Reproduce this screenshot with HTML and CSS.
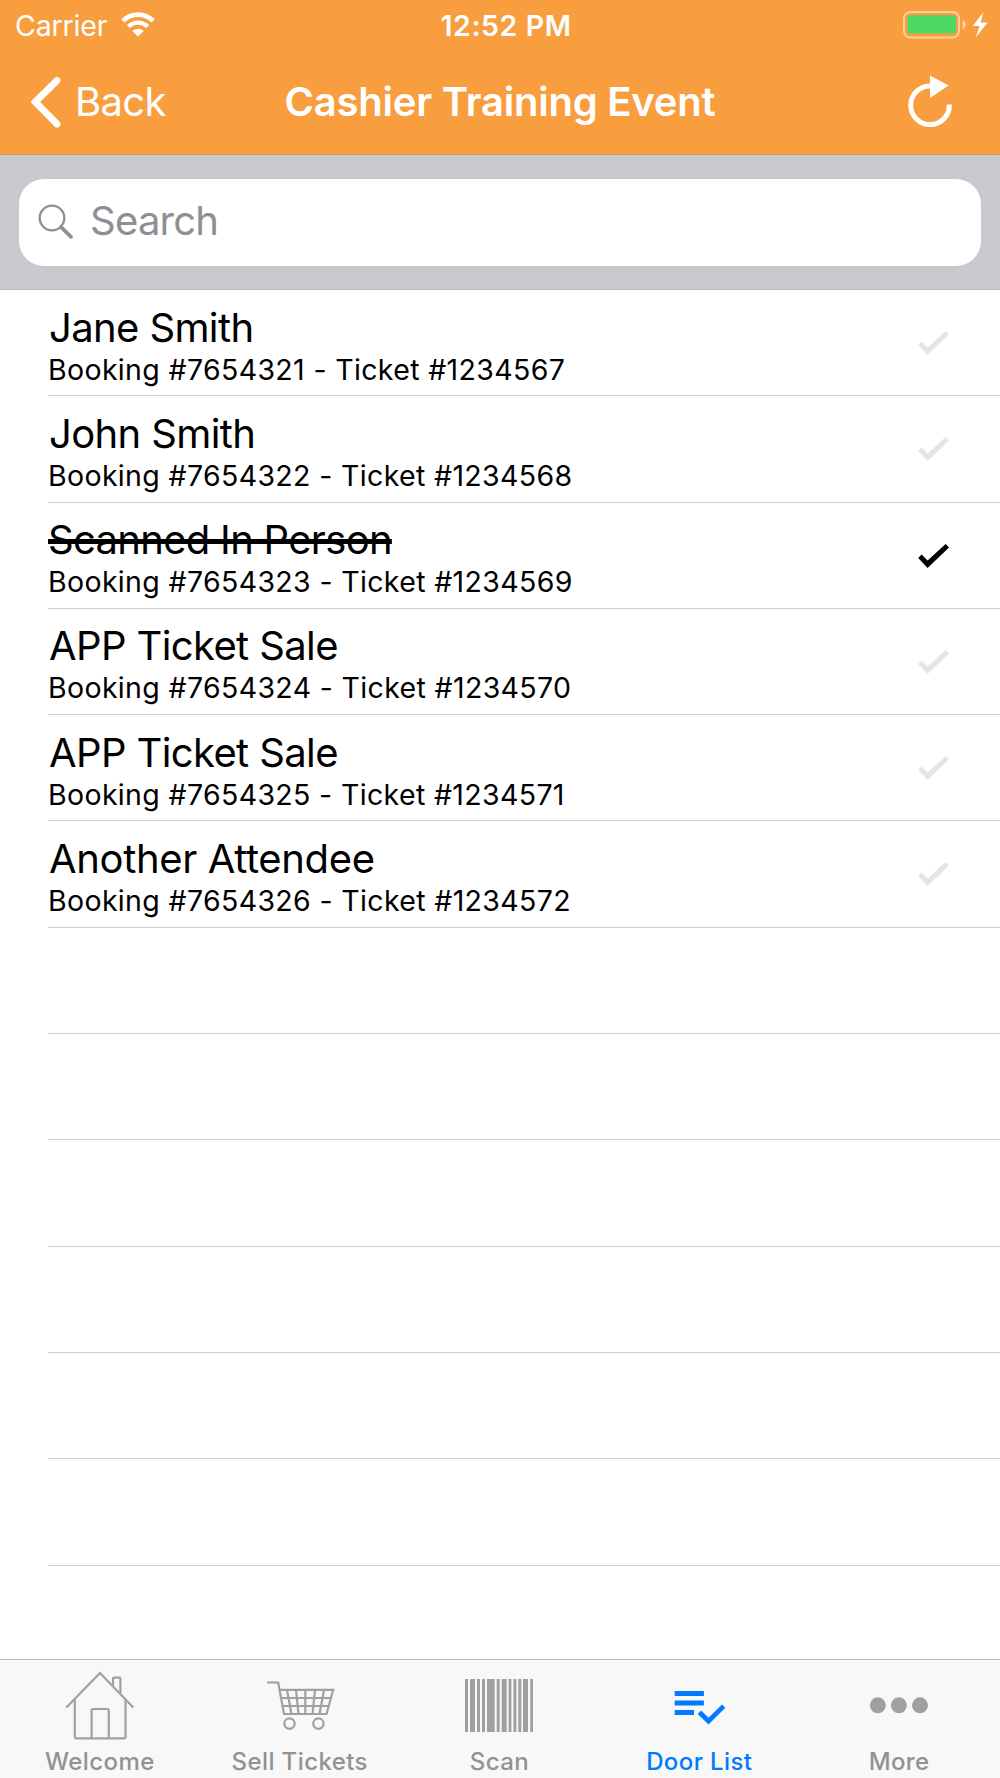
FILE: index.html
```html
<!DOCTYPE html>
<html lang="en">
<head>
  <meta charset="UTF-8">
  <meta name="viewport" content="width=device-width, initial-scale=1.0">
  <title>Door List</title>
  <link rel="stylesheet" href="styles.css">
</head>
<body>

<svg class="defs" width="0" height="0">
  <symbol id="check" viewBox="0 0 32 24">
    <path d="M0.2 14 L3.6 10.6 L9.6 16.4 L27.6 0 L31 3.4 L9.6 24 Z"/>
  </symbol>
</svg>

<header class="header">
  <div class="status-bar">
    <div class="status-left">
      <span class="carrier">Carrier</span>
      <svg class="wifi" width="34" height="25" viewBox="0 0 34 25">
        <path d="M1.8 8.9 A21.5 21.5 0 0 1 32.2 8.9" fill="none" stroke="#fff" stroke-width="4.6"/>
        <path d="M7.4 14.6 A13.6 13.6 0 0 1 26.6 14.6" fill="none" stroke="#fff" stroke-width="4.2"/>
        <path d="M11.3 19 Q17 14.6 22.7 19 L17 24.6 Z" fill="#fff"/>
      </svg>
    </div>
    <span class="time">12:52 PM</span>
    <div class="status-right">
      <svg width="86" height="28" viewBox="0 0 86 28">
        <rect x="1" y="1" width="55" height="25.5" rx="6.5" fill="none" stroke="#fff" stroke-opacity=".5" stroke-width="2"/>
        <rect x="4.5" y="4.2" width="48.4" height="18.4" rx="3" fill="#4cd964"/>
        <path d="M59.5 8.5 Q62.8 10 62.8 13.5 Q62.8 17 59.5 18.5 Z" fill="#fff" fill-opacity=".5"/>
        <path d="M80.5 1 L69.8 15 L76.6 15 L72.8 26.5 L84.6 11.5 L77.6 11.5 Z" fill="#fff"/>
      </svg>
    </div>
  </div>
  <div class="nav-bar">
    <a class="back">
      <svg width="30" height="52" viewBox="0 0 30 52">
        <path d="M26 4.5 L4.2 26 L26 48" fill="none" stroke="#fff" stroke-width="6.8" stroke-linecap="round"/>
      </svg>
      <span class="back-label">Back</span>
    </a>
    <h1 class="title">Cashier Training Event</h1>
    <div class="refresh">
      <svg width="44" height="53" viewBox="0 0 44 53">
        <path d="M41.3 29.5 A19.3 19.3 0 1 1 22 11" fill="none" stroke="#fff" stroke-width="5"/>
        <path d="M22 0.5 L40.5 10.5 L22 23 Z" fill="#fff"/>
      </svg>
    </div>
  </div>
</header>

<div class="search-bar">
  <div class="search-box">
    <svg width="36" height="36" viewBox="0 0 36 36">
      <circle cx="14" cy="14" r="12.3" fill="none" stroke="#8e8e93" stroke-width="2.3"/>
      <path d="M23 23 L33 32.8" stroke="#8e8e93" stroke-width="3.8" stroke-linecap="round"/>
    </svg>
    <span class="placeholder">Search</span>
  </div>
</div>

<ul class="list">
  <li class="row">
    <div class="info">
      <div class="name"><span>Jane Smith</span></div>
      <div class="ticket">Booking #7654321 - Ticket #1234567</div>
    </div>
    <svg class="check"><use href="#check"/></svg>
  </li>
  <li class="row">
    <div class="info">
      <div class="name"><span>John Smith</span></div>
      <div class="ticket">Booking #7654322 - Ticket #1234568</div>
    </div>
    <svg class="check"><use href="#check"/></svg>
  </li>
  <li class="row scanned">
    <div class="info">
      <div class="name"><span>Scanned In Person</span></div>
      <div class="ticket">Booking #7654323 - Ticket #1234569</div>
    </div>
    <svg class="check"><use href="#check"/></svg>
  </li>
  <li class="row">
    <div class="info">
      <div class="name"><span>APP Ticket Sale</span></div>
      <div class="ticket">Booking #7654324 - Ticket #1234570</div>
    </div>
    <svg class="check"><use href="#check"/></svg>
  </li>
  <li class="row">
    <div class="info">
      <div class="name"><span>APP Ticket Sale</span></div>
      <div class="ticket">Booking #7654325 - Ticket #1234571</div>
    </div>
    <svg class="check"><use href="#check"/></svg>
  </li>
  <li class="row">
    <div class="info">
      <div class="name wide"><span>Another Attendee</span></div>
      <div class="ticket">Booking #7654326 - Ticket #1234572</div>
    </div>
    <svg class="check"><use href="#check"/></svg>
  </li>
  <li class="row"></li>
  <li class="row"></li>
  <li class="row"></li>
  <li class="row"></li>
  <li class="row"></li>
  <li class="row"></li>
</ul>

<nav class="tab-bar">
  <a class="tab">
    <svg width="80" height="74" viewBox="0 0 80 74" fill="none" stroke="#a0a0a0" stroke-width="2.2">
      <path d="M6.3 40.5 L40 6 L73.3 40.5"/>
      <path d="M14.8 33 V70 Q14.8 71.3 16 71.3 H64.3 Q65.5 71.3 65.5 70 V33"/>
      <path d="M31.6 71 V43.5 Q31.6 42 33 42 H47.4 Q48.8 42 48.8 43.5 V71"/>
      <path d="M53 18.5 V12 Q53 10.6 54.4 10.6 H59 Q60.4 10.6 60.4 12 V26"/>
    </svg>
    <span>Welcome</span>
  </a>
  <a class="tab">
    <svg width="80" height="74" viewBox="0 0 80 74" fill="none" stroke="#a0a0a0" stroke-width="2.2">
      <path d="M7 15.5 H18.2 L24 47 H66.5 L73.2 22.8 H20"/>
      <path d="M21 31 H71 M22.5 39 H69 M27 23 L31.5 47 M36 23 L38.5 47 M45.3 23 V47 M55 23 L52.5 47 M64 23 L59.5 47"/>
      <circle cx="29.5" cy="56.6" r="5.2"/>
      <circle cx="58.4" cy="56.6" r="5.2"/>
    </svg>
    <span>Sell Tickets</span>
  </a>
  <a class="tab">
    <svg width="80" height="74" viewBox="0 0 80 74" fill="#a0a0a0">
      <path d="M5 12h3v53h-3z M10 12h5v53h-5z M17 12h3v53h-3z M22 12h3v53h-3z M27 12h7.7v53h-7.7z M36.7 12h3v53h-3z M41.7 12h5v53h-5z M48.6 12h2.8v53h-2.8z M53.4 12h3v53h-3z M58.3 12h3v53h-3z M63 12h5v53h-5z M70.2 12h2.8v53h-2.8z"/>
    </svg>
    <span>Scan</span>
  </a>
  <a class="tab active">
    <svg width="80" height="74" viewBox="0 0 80 74" fill="#007aff">
      <path d="M14.7 24h29.2v5h-29.2z M14.7 33.5h29.2v5h-29.2z M14.7 43h19.3v5h-19.3z"/>
      <path d="M37.7 47 L41.2 43.6 L48.5 50.8 L62 37.4 L65.3 40.8 L48.5 57.5 Z"/>
    </svg>
    <span>Door List</span>
  </a>
  <a class="tab">
    <svg width="80" height="74" viewBox="0 0 80 74" fill="#a0a0a0">
      <circle cx="17.8" cy="38.3" r="8"/>
      <circle cx="38.9" cy="38.3" r="8"/>
      <circle cx="60" cy="38.3" r="8"/>
    </svg>
    <span>More</span>
  </a>
</nav>

</body>
</html>
```
FILE: styles.css
```css
* { box-sizing: border-box; }
body {
  margin: 0;
  width: 1000px;
  height: 1778px;
  display: flex;
  flex-direction: column;
  overflow: hidden;
  background: #fff;
  color: #000;
  font-family: Inter, "Liberation Sans", sans-serif;
}
svg { display: block; flex: none; }
.defs { display: none; }

/* header */
.header { height: 155px; background: #f89e3f; color: #fff; border-bottom: 1px solid #d0944f; }
.status-bar {
  height: 50px;
  padding: 0 11px 0 15px;
  display: grid;
  grid-template-columns: 1fr auto 1fr;
  font-size: 28.5px;
  line-height: 51px;
}
.status-left { display: flex; gap: 14px; }
.carrier { letter-spacing: -0.15px; }
.wifi { margin-top: 12px; }
.time { margin-left: 8px; font-weight: 600; letter-spacing: 0.6px; }
.status-right { display: flex; justify-content: flex-end; padding-top: 11px; }
.nav-bar {
  height: 104px;
  padding: 0 31px;
  display: grid;
  grid-template-columns: 1fr auto 1fr;
  line-height: 104px;
  font-size: 40px;
}
.back { display: flex; gap: 14px; }
.back svg { margin-top: 26px; }
.back-label { letter-spacing: -0.7px; }
.title { margin: 0; font-size: 40px; font-weight: 600; letter-spacing: -0.22px; }
.refresh { display: flex; justify-content: flex-end; padding: 25px 17px 0 0; }

/* search */
.search-bar { height: 135px; padding: 24px 19px 0; background: #c9c8ce; border-bottom: 1px solid #b9b8bc; }
.search-box {
  height: 87px;
  padding-left: 19px;
  display: flex;
  gap: 16px;
  background: #fff;
  border-radius: 25px;
  color: #8e8e93;
  font-size: 40px;
  line-height: 84px;
}
.search-box svg { margin-top: 25px; }
.placeholder { letter-spacing: -0.75px; }

/* attendees */
.list { flex: 1; min-height: 0; margin: 0; padding: 0 0 0 48px; list-style: none; }
.row {
  height: 106.3px;
  padding-right: 50px;
  display: flex;
  justify-content: space-between;
  border-bottom: 1px solid #cfcfd1;
}
.info { padding-top: 13.5px; }
.name {
  height: 48px;
  padding-left: 1px;
  font-size: 40px;
  line-height: 48px;
  letter-spacing: -0.62px;
  white-space: nowrap;
}
.name.wide { letter-spacing: -0.35px; }
.ticket { font-size: 28.5px; line-height: 35px; letter-spacing: 0.35px; white-space: nowrap; }
.check { width: 32px; height: 24px; margin-top: 41px; fill: #e5e5e5; }
.scanned .name { padding-left: 0; letter-spacing: -0.7px; }
.scanned .name span { text-decoration: line-through; text-decoration-thickness: 5px; }
.scanned .check { fill: #000; }

/* tabs */
.tab-bar {
  height: 119px;
  padding-right: 1px;
  display: grid;
  grid-template-columns: repeat(5, 1fr);
  background: #f8f8f8;
  border-top: 1px solid #b9b9b9;
}
.tab {
  padding-top: 7px;
  display: flex;
  flex-direction: column;
  align-items: center;
  color: #929292;
  font-size: 24px;
  line-height: 41px;
  letter-spacing: 0.4px;
  font-weight: 500;
}
.tab svg { margin-left: 1px; }
.active { color: #007aff; }
```
